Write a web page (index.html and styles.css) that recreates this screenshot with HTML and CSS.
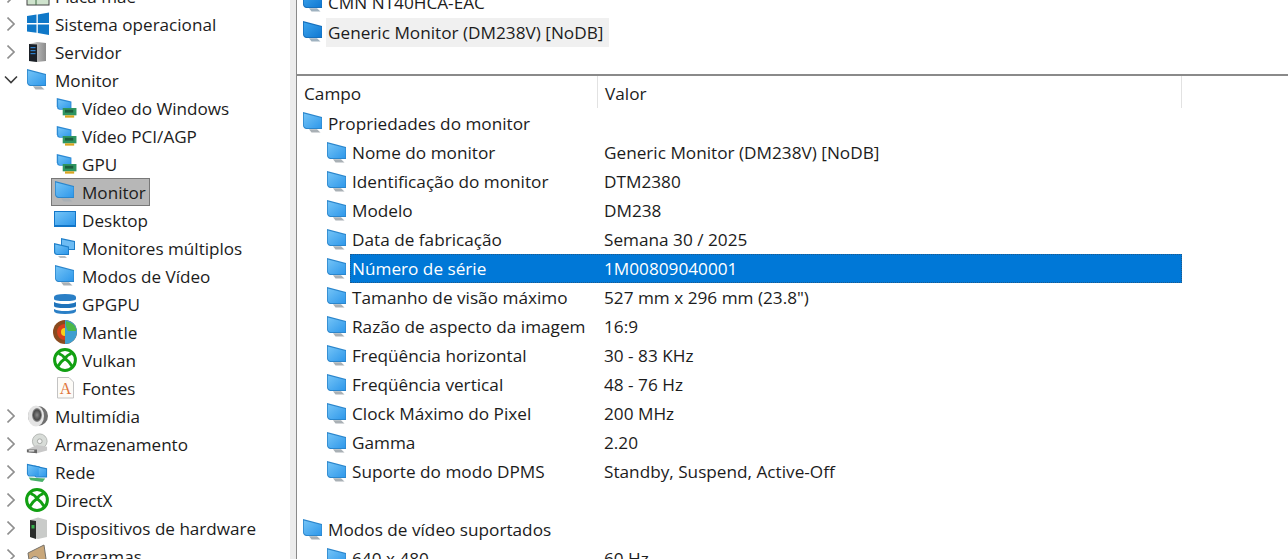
FILE: index.html
```html
<!DOCTYPE html>
<html lang="pt-BR">

<head>
    <meta charset="UTF-8">
    <meta name="viewport" content="width=device-width, initial-scale=1.0">
    <title>Monitor</title>
    <link rel="stylesheet" href="styles.css">
</head>

<body>
    <svg class="sprites" width="0" height="0">
        <defs>
            <linearGradient id="screen" x1="0" y1="0" x2="1" y2="1">
                <stop offset="0" stop-color="#74c4f7" />
                <stop offset="1" stop-color="#2f98ea" />
            </linearGradient>
            <linearGradient id="screen-dark" x1="0" y1="0" x2="1" y2="1">
                <stop offset="0" stop-color="#3fa6ee" />
                <stop offset="1" stop-color="#0f78d2" />
            </linearGradient>
            <linearGradient id="metal" x1="0" y1="0" x2="1" y2="0">
                <stop offset="0" stop-color="#d8d8d8" />
                <stop offset="1" stop-color="#8c8c8c" />
            </linearGradient>
            <radialGradient id="cone">
                <stop offset="0" stop-color="#8a8a8a" />
                <stop offset="0.7" stop-color="#4a4a4a" />
                <stop offset="1" stop-color="#9a9a9a" />
            </radialGradient>
            <symbol id="i-monitor" viewBox="0 0 22 22">
                <path d="M1 0 L20 5 V17 L4 17 Q1 16 1 13 Z" fill="#2b86cc" />
                <path d="M1.8 1.4 L19.4 6 V16 L4.5 16 Q1.8 15.4 1.8 12.6 Z" fill="url(#screen)" />
                <path d="M7 17.2 H15 L18.5 20.5 H9.5 Z" fill="#a9b0b5" />
            </symbol>
            <symbol id="i-monitor-dark" viewBox="0 0 22 22">
                <path d="M1 0 L20 5 V17 L4 17 Q1 16 1 13 Z" fill="#1670bd" />
                <path d="M1.8 1.4 L19.5 6 V16 L4.5 16 Q1.8 15 1.8 12.5 Z" fill="url(#screen-dark)" />
                <path d="M7 17.2 H15 L18.5 20.5 H9.5 Z" fill="#9fb2c0" />
            </symbol>
            <symbol id="i-card" viewBox="-3 -1 24 24">
                <path d="M0 0 L16 4 V13 L3 13 Q0 12 0 9 Z" fill="#2c8ad4" />
                <path d="M1.5 2 L15 5 V12 L3.5 12 Q1.5 11.5 1.5 9 Z" fill="url(#screen)" />
                <rect x="6.5" y="11" width="15" height="8" fill="#2f9560" />
                <rect x="9" y="13" width="9" height="3" fill="#1c5d3d" />
                <rect x="9" y="19" width="10" height="2.5" fill="#d9a520" />
            </symbol>
            <symbol id="i-desktop" viewBox="0 0 22 22">
                <rect x="0" y="2" width="22" height="16" fill="#1276c8" />
                <rect x="1" y="3" width="20" height="13" fill="url(#screen)" />
            </symbol>
            <symbol id="i-multi" viewBox="0 0 22 22">
                <path d="M7 1 L21 4 V13 L10 13 Q7 12 7 10 Z" fill="#1f7fc9" />
                <path d="M8 2.5 L20 5 V12 L9.5 12 Q8 11.5 8 10 Z" fill="#6dbcf4" />
                <path d="M0 6 L15 9.5 V18 L3 18 Q0 17.5 0 15 Z" fill="#1f7fc9" />
                <path d="M1.2 7.5 L14 10.5 V17 L3 17 Q1.2 16.5 1.2 15 Z" fill="url(#screen)" />
                <path d="M4 19 H11 L13 21 H6 Z" fill="#b9bec2" />
            </symbol>
            <symbol id="i-gpgpu" viewBox="0 0 22 22">
                <path d="M0 4 Q0 1 11 1 Q22 1 22 4 V6 Q22 8 11 8 Q0 8 0 6 Z" fill="#2a7fc6" />
                <path d="M0 9 Q4 11 11 11 Q18 11 22 9 V13 Q22 15 11 15 Q0 15 0 13 Z" fill="#1f73bb" />
                <path d="M0 16 Q4 18 11 18 Q18 18 22 16 V18 Q22 21 11 21 Q0 21 0 18 Z" fill="#2a7fc6" />
            </symbol>
            <symbol id="i-mantle" viewBox="1 1 22 22">
                <circle cx="12" cy="12" r="12" fill="#8a4a1e" />
                <path d="M12 0 A12 12 0 0 1 12 24 Z" fill="#3f9fd0" />
                <path d="M13 1 Q24 4 23 11 L15 11 Q12 6 13 1 Z" fill="#4cb848" />
                <path d="M12 4 A8 8 0 0 0 12 20 Z" fill="#d8401c" />
                <path d="M12 8 A4 4 0 0 0 12 16 Z" fill="#f6d21e" />
            </symbol>
            <symbol id="i-xbox" viewBox="1 1 22 22">
                <circle cx="12" cy="12" r="10.4" fill="#fff" stroke="#12a012" stroke-width="3" />
                <path d="M5.5 5.5 Q10 7 12 10.5 Q14 7 18.5 5.5 M4.5 19 Q7 14 12 10.5 Q17 14 19.5 19" fill="none" stroke="#12a012" stroke-width="2.8" />
            </symbol>
            <symbol id="i-font" viewBox="0 0 22 22">
                <path d="M3.5 0.5 H15 L19.5 5 V21 H3.5 Z" fill="#fdfbf7" stroke="#c3c3c3" />
                <text x="11.5" y="17" class="font-glyph">A</text>
            </symbol>
            <symbol id="i-windows" viewBox="0 2 22 22">
                <path d="M1 5 L10.5 3.6 V12 H1 Z M11.8 3.4 L23 1.6 V12 H11.8 Z M1 13.4 H10.5 V21.8 L1 20.4 Z M11.8 13.4 H23 V24 L11.8 22 Z" fill="#0f78c8" />
            </symbol>
            <symbol id="i-server" viewBox="-1 0 22 22">
                <path d="M2 3 L10 1 L19 2 V20 L10 21 L2 20 Z" fill="url(#metal)" />
                <path d="M2 3 L10 3.5 V21 L2 20 Z" fill="#1b2027" />
                <rect x="3.5" y="6" width="5" height="1.2" fill="#2e7fc9" />
                <rect x="3.5" y="9" width="5" height="1.2" fill="#2e7fc9" />
                <rect x="3.5" y="12" width="5" height="1.2" fill="#2e7fc9" />
            </symbol>
            <symbol id="i-speaker" viewBox="0 0 22 22">
                <circle cx="12" cy="11" r="10" fill="#6f6f6f" />
                <ellipse cx="10" cy="11" rx="8" ry="10.5" fill="#e4e4e4" />
                <ellipse cx="11" cy="10" rx="5" ry="7" fill="url(#cone)" />
            </symbol>
            <symbol id="i-drive" viewBox="0 0 24 24">
                <circle cx="15" cy="9" r="8" fill="#d8dcd8" stroke="#b0b4b0" />
                <circle cx="15" cy="9" r="2.6" fill="#f4f4f4" stroke="#a0a4a0" />
                <path d="M1 18 L12 13 L23 15 V19 L12 22 L1 21 Z" fill="#c8c8c8" />
                <path d="M1 18 L12 18 V22 L1 21 Z" fill="#666" />
                <rect x="3" y="18.8" width="6" height="1.4" fill="#f0f0f0" />
            </symbol>
            <symbol id="i-network" viewBox="0 0 24 24">
                <path d="M1 3 L15 6 V17 L3 17 Q1 16 1 14 Z" fill="#1f7fc9" />
                <path d="M9 5 L23 8 V18 L11 18 Q9 17 9 15 Z" fill="#1f7fc9" />
                <path d="M10 6.5 L22 9 V17 L11 17 Z" fill="url(#screen)" />
                <path d="M2 4.5 L14 7 V16 L3.5 16 Q2 15 2 14 Z" fill="url(#screen)" />
                <path d="M3 18 L21 19 L18 23 L5 21 Z" fill="#49b06a" />
            </symbol>
            <symbol id="i-device" viewBox="-1 0 22 22">
                <path d="M3 3 L11 0.5 L20 3 V20 L11 22 L3 20 Z" fill="#c9cbc9" />
                <path d="M3 3 L9 4 V22 L3 20 Z" fill="#2a2d2b" />
                <rect x="4.5" y="8" width="3" height="3.5" fill="#35b04a" />
            </symbol>
            <symbol id="i-programs" viewBox="0 0 22 22">
                <path d="M2 8 L18 0 L20 14 L4 22 Z" fill="#c9a77a" stroke="#75716a" />
                <circle cx="9" cy="16" r="4.5" fill="#ddd" stroke="#777" />
            </symbol>
            <symbol id="i-board" viewBox="0 3 22 22">
                <rect x="1" y="1" width="22" height="22" fill="#cfe3cd" stroke="#444" />
                <path d="M10 1 V23 M10 12 H23" stroke="#3c6b42" fill="none" />
            </symbol>
            <symbol id="chev-right" viewBox="1 1 8 14">
                <path d="M1.5 1.5 L8 8 L1.5 14.5" fill="none" stroke="#8f8f8f" stroke-width="1.6" />
            </symbol>
            <symbol id="chev-down" viewBox="0 0 14 10">
                <path d="M1 1.5 L7 7.5 L13 1.5" fill="none" stroke="#3c3c3c" stroke-width="1.6" />
            </symbol>
        </defs>
    </svg>

    <div class="app">
        <nav class="tree">
            <div class="node"><svg class="chev"><use href="#chev-right" /></svg><svg class="ico"><use href="#i-board" /></svg><span>Placa mãe</span></div>
            <div class="node"><svg class="chev"><use href="#chev-right" /></svg><svg class="ico"><use href="#i-windows" /></svg><span>Sistema operacional</span></div>
            <div class="node"><svg class="chev"><use href="#chev-right" /></svg><svg class="ico"><use href="#i-server" /></svg><span>Servidor</span></div>
            <div class="node"><svg class="chev-open"><use href="#chev-down" /></svg><svg class="ico"><use href="#i-monitor" /></svg><span>Monitor</span></div>
            <div class="node child"><svg class="ico"><use href="#i-card" /></svg><span>Vídeo do Windows</span></div>
            <div class="node child"><svg class="ico"><use href="#i-card" /></svg><span>Vídeo PCI/AGP</span></div>
            <div class="node child"><svg class="ico"><use href="#i-card" /></svg><span>GPU</span></div>
            <div class="node child"><div class="picked"><svg class="ico"><use href="#i-monitor" /></svg><span>Monitor</span></div></div>
            <div class="node child"><svg class="ico"><use href="#i-desktop" /></svg><span>Desktop</span></div>
            <div class="node child"><svg class="ico"><use href="#i-multi" /></svg><span>Monitores múltiplos</span></div>
            <div class="node child"><svg class="ico"><use href="#i-monitor" /></svg><span>Modos de Vídeo</span></div>
            <div class="node child"><svg class="ico"><use href="#i-gpgpu" /></svg><span>GPGPU</span></div>
            <div class="node child"><svg class="ico"><use href="#i-mantle" /></svg><span>Mantle</span></div>
            <div class="node child"><svg class="ico"><use href="#i-xbox" /></svg><span>Vulkan</span></div>
            <div class="node child"><svg class="ico"><use href="#i-font" /></svg><span>Fontes</span></div>
            <div class="node"><svg class="chev"><use href="#chev-right" /></svg><svg class="ico"><use href="#i-speaker" /></svg><span>Multimídia</span></div>
            <div class="node"><svg class="chev"><use href="#chev-right" /></svg><svg class="ico"><use href="#i-drive" /></svg><span>Armazenamento</span></div>
            <div class="node"><svg class="chev"><use href="#chev-right" /></svg><svg class="ico"><use href="#i-network" /></svg><span>Rede</span></div>
            <div class="node"><svg class="chev"><use href="#chev-right" /></svg><svg class="ico"><use href="#i-xbox" /></svg><span>DirectX</span></div>
            <div class="node"><svg class="chev"><use href="#chev-right" /></svg><svg class="ico"><use href="#i-device" /></svg><span>Dispositivos de hardware</span></div>
            <div class="node"><svg class="chev"><use href="#chev-right" /></svg><svg class="ico"><use href="#i-programs" /></svg><span>Programas</span></div>
        </nav>

        <div class="splitter"></div>

        <main class="main">
            <section class="devices">
                <div class="device"><svg class="ico"><use href="#i-monitor-dark" /></svg><span class="device-name">CMN NT40HCA-EAC</span></div>
                <div class="device"><svg class="ico"><use href="#i-monitor-dark" /></svg><span class="device-name current">Generic Monitor (DM238V) [NoDB]</span></div>
            </section>

            <section class="props">
                <div class="head">
                    <div class="head-name">Campo</div>
                    <div class="head-value">Valor</div>
                </div>

                <div class="row group"><svg class="ico"><use href="#i-monitor" /></svg><div class="cells"><span class="name">Propriedades do monitor</span></div></div>
                <div class="row"><svg class="ico"><use href="#i-monitor" /></svg><div class="cells"><span class="name">Nome do monitor</span><span>Generic Monitor (DM238V) [NoDB]</span></div></div>
                <div class="row"><svg class="ico"><use href="#i-monitor" /></svg><div class="cells"><span class="name">Identificação do monitor</span><span>DTM2380</span></div></div>
                <div class="row"><svg class="ico"><use href="#i-monitor" /></svg><div class="cells"><span class="name">Modelo</span><span>DM238</span></div></div>
                <div class="row"><svg class="ico"><use href="#i-monitor" /></svg><div class="cells"><span class="name">Data de fabricação</span><span>Semana 30 / 2025</span></div></div>
                <div class="row selected"><svg class="ico"><use href="#i-monitor" /></svg><div class="cells"><span class="name">Número de série</span><span>1M00809040001</span></div></div>
                <div class="row"><svg class="ico"><use href="#i-monitor" /></svg><div class="cells"><span class="name">Tamanho de visão máximo</span><span>527 mm x 296 mm (23.8")</span></div></div>
                <div class="row"><svg class="ico"><use href="#i-monitor" /></svg><div class="cells"><span class="name">Razão de aspecto da imagem</span><span>16:9</span></div></div>
                <div class="row"><svg class="ico"><use href="#i-monitor" /></svg><div class="cells"><span class="name">Freqüência horizontal</span><span>30 - 83 KHz</span></div></div>
                <div class="row"><svg class="ico"><use href="#i-monitor" /></svg><div class="cells"><span class="name">Freqüência vertical</span><span>48 - 76 Hz</span></div></div>
                <div class="row"><svg class="ico"><use href="#i-monitor" /></svg><div class="cells"><span class="name">Clock Máximo do Pixel</span><span>200 MHz</span></div></div>
                <div class="row"><svg class="ico"><use href="#i-monitor" /></svg><div class="cells"><span class="name">Gamma</span><span>2.20</span></div></div>
                <div class="row"><svg class="ico"><use href="#i-monitor" /></svg><div class="cells"><span class="name">Suporte do modo DPMS</span><span>Standby, Suspend, Active-Off</span></div></div>
                <div class="row blank"></div>
                <div class="row group"><svg class="ico"><use href="#i-monitor" /></svg><div class="cells"><span class="name">Modos de vídeo suportados</span></div></div>
                <div class="row"><svg class="ico"><use href="#i-monitor" /></svg><div class="cells"><span class="name">640 x 480</span><span>60 Hz</span></div></div>
            </section>
        </main>
    </div>
</body>

</html>
```

FILE: styles.css
```css
body {
    margin: 0;
    height: 559px;
    overflow: hidden;
    background: #fff;
    color: #1c1c1c;
    font-family: 'Open Sans', 'Noto Sans', sans-serif;
    font-size: 17.1px;
}

.sprites {
    position: absolute;
}

symbol {
    overflow: visible;
}

.app {
    display: flex;
    height: 559px;
    overflow: hidden;
}

.ico {
    width: 22px;
    height: 22px;
    flex: none;
    overflow: visible;
}

.font-glyph {
    font-family: 'Liberation Serif', serif;
    font-size: 16px;
    fill: #e0743a;
    text-anchor: middle;
}

/* left tree */
.tree {
    width: 290px;
    flex: none;
    margin-top: -18px;
}

.node {
    display: flex;
    align-items: center;
    height: 28px;
    padding-left: 7px;
    white-space: nowrap;
}

.node .ico {
    margin-left: 11px;
    margin-right: 7px;
}

.chev {
    width: 8px;
    height: 14px;
    flex: none;
}

.chev-open {
    width: 14px;
    height: 10px;
    margin-left: -3px;
    margin-right: -3px;
    flex: none;
}

.node.child {
    padding-left: 43px;
}

.node.child .ico {
    margin-right: 6px;
}

.picked {
    display: flex;
    align-items: center;
    box-sizing: border-box;
    height: 28px;
    margin-left: 8px;
    padding-right: 3px;
    background: #b7b7b7;
    border: 1px solid #787878;
}

.node.child .picked .ico {
    margin-left: 2px;
}

.splitter {
    width: 6px;
    flex: none;
    background: #ececec;
    border-right: 1px solid #8a8a8a;
}

/* right side */
.main {
    flex: 1;
    min-width: 0;
    font-size: 17.2px;
}

.devices {
    height: 74px;
    overflow: hidden;
}

.device {
    display: flex;
    align-items: center;
    height: 30px;
    padding-left: 5px;
}

.device:first-child {
    margin-top: -13px;
}

.device .ico {
    margin-right: 2px;
}

.device-name {
    padding: 4px 6px 4px 2px;
    line-height: 21px;
}

.device-name.current {
    background: #f0f0f0;
}

.props {
    border-top: 2px solid #8a8a8a;
}

.head {
    display: flex;
    width: 885px;
    height: 32px;
}

.head-name,
.head-value {
    box-sizing: border-box;
    display: flex;
    align-items: center;
    padding: 2px 0 0 7px;
    border-right: 1px solid #e2e2e2;
}

.head-name {
    width: 301px;
}

.head-value {
    flex: 1;
}

.row {
    display: flex;
    align-items: center;
    width: 856px;
    height: 29px;
    padding-left: 29px;
}

.row.group {
    padding-left: 5px;
    width: 880px;
}

.head + .row.group {
    height: 30px;
}

.row .ico {
    margin-right: 2px;
}

.cells {
    display: flex;
    align-items: center;
    flex: 1;
    height: 29px;
    padding-left: 2px;
    white-space: nowrap;
}

.name {
    width: 252px;
    flex: none;
}

.selected .cells {
    background: #0078d7;
    color: #fff;
    outline: 1px dotted #1f5a8c;
    outline-offset: -1px;
}
```
